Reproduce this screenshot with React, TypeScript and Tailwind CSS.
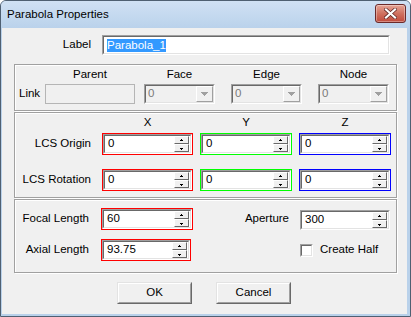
import React from "react";

const Sunken = ({ className = "", inner = "", children }: { className?: string; inner?: string; children?: React.ReactNode }) => (
  <div className={`border border-t-[#a0a0a0] border-l-[#a0a0a0] border-b-white border-r-white ${className}`}>
    <div className={`h-full w-full border border-t-[#696969] border-l-[#696969] border-b-[#e3e3e3] border-r-[#e3e3e3] ${inner}`}>{children}</div>
  </div>
);

const Up = () => (
  <svg width="5" height="3" viewBox="0 0 5 3" shapeRendering="crispEdges">
    <rect x="2" y="0" width="1" height="1" fill="#000" />
    <rect x="1" y="1" width="3" height="1" fill="#000" />
  </svg>
);
const Down = () => (
  <svg width="5" height="3" viewBox="0 0 5 3" shapeRendering="crispEdges">
    <rect x="1" y="1" width="3" height="1" fill="#000" />
    <rect x="2" y="2" width="1" height="1" fill="#000" />
  </svg>
);

const SpinBtn = ({ children }: { children: React.ReactNode }) => (
  <div className="flex-1 flex items-center justify-center bg-[#f0f0f0] border border-t-white border-l-white border-b-[#696969] border-r-[#696969]">
    {children}
  </div>
);

const Spin = ({ value, color, w, h = 22 }: { value: string; color?: string; w: number; h?: number }) => {
  const field = (
    <Sunken className="h-full w-full" inner="bg-white flex items-stretch">
      <div className="flex-1 flex items-center pl-[3px] text-black">{value}</div>
      <div className="flex flex-col w-[16px] pr-[1px] py-0">
        <SpinBtn><Up /></SpinBtn>
        <SpinBtn><Down /></SpinBtn>
      </div>
    </Sunken>
  );
  if (!color) return <div style={{ width: w, height: h }}>{field}</div>;
  return (
    <div className={`border ${color}`} style={{ width: w, height: h }}>
      {field}
    </div>
  );
};

const Combo = () => (
  <Sunken className="w-[71px] h-[20px]" inner="bg-[#f0f0f0] flex items-stretch">
    <div className="flex-1 flex items-center pl-[2px] text-[#7a7a7a]">0</div>
    <div className="w-[17px] flex items-center justify-center bg-[#f0f0f0] border border-t-white border-l-white border-b-[#a0a0a0] border-r-[#a0a0a0]">
      <svg width="7" height="4" viewBox="0 0 7 4" shapeRendering="crispEdges">
        <rect x="0" y="0" width="7" height="1" fill="#a0a0a0" />
        <rect x="1" y="1" width="5" height="1" fill="#a0a0a0" />
        <rect x="2" y="2" width="3" height="1" fill="#a0a0a0" />
        <rect x="3" y="3" width="1" height="1" fill="#a0a0a0" />
      </svg>
    </div>
  </Sunken>
);

const Btn = ({ label }: { label: string }) => (
  <div className="w-[75px] h-[22px] border border-t-[#e3e3e3] border-l-[#e3e3e3] border-b-[#696969] border-r-[#696969]">
    <div className="h-full w-full bg-[#f0f0f0] border border-t-white border-l-white border-b-[#a0a0a0] border-r-[#a0a0a0] flex items-center justify-center text-black">
      {label}
    </div>
  </div>
);

const group = "border border-[#a0a0a0] shadow-[1px_1px_0_#fff,inset_1px_1px_0_#fff] w-[383px] ml-[12px]";

export default function App() {
  return (
    <div className="w-[411px] h-[317px] bg-[#b9d1ea] border border-[#4f6072] rounded-t-[6px] flex flex-col font-['Liberation_Sans',Arial,sans-serif] text-[11.5px] text-black overflow-hidden">
      {/* Title bar */}
      <div className="h-[27px] flex items-start justify-between bg-gradient-to-b from-[#d0e1f4] to-[#bad2eb]">
        <div className="pl-[6px] pt-[5px] text-[11.5px] leading-[16px] text-black">Parabola Properties</div>
        <div className="mt-[3px] mr-[4px] w-[31px] h-[19px] rounded-[3px] border border-[#6b2a2a] bg-gradient-to-b from-[#e5a496] via-[#cf7160] to-[#c04a3c] flex items-center justify-center shadow-[inset_0_0_0_1px_rgba(255,255,255,0.35)]">
          <svg width="13" height="11" viewBox="0 0 13 11">
            <path d="M2 1.5 L11 9.5 M11 1.5 L2 9.5" stroke="#5a2424" strokeWidth="3.6" strokeLinecap="square" />
            <path d="M2 1.5 L11 9.5 M11 1.5 L2 9.5" stroke="#ffffff" strokeWidth="2.2" strokeLinecap="square" />
          </svg>
        </div>
      </div>

      {/* Client area */}
      <div className="flex-1 ml-[1px] mr-[3px] mb-[2px] bg-[#f0f0f0] flex flex-col">
        {/* Label row */}
        <div className="mt-[7px] flex items-center h-[20px]">
          <div className="w-[89px] text-right">Label</div>
          <Sunken className="ml-[11px] w-[288px] h-[20px]" inner="bg-white flex items-center pl-[3px]">
            <span className="bg-[#3399ff] text-white leading-[13px]">Parabola_1</span>
          </Sunken>
        </div>

        {/* Group 1 */}
        <div className={`${group} mt-[9px] h-[47px]`}>
          <div className="flex h-[19px] items-center">
            <div className="w-[30px]" />
            <div className="w-[90px] text-center">Parent</div>
            <div className="ml-[9px] w-[71px] text-center">Face</div>
            <div className="ml-[16px] w-[71px] text-center">Edge</div>
            <div className="ml-[16px] w-[71px] text-center">Node</div>
          </div>
          <div className="flex h-[20px] items-center">
            <div className="w-[30px] pl-[4px]">Link</div>
            <div className="w-[90px] h-[20px] border border-[#b5b5b5] bg-[#f0f0f0]" />
            <div className="ml-[9px]"><Combo /></div>
            <div className="ml-[16px]"><Combo /></div>
            <div className="ml-[16px]"><Combo /></div>
          </div>
        </div>

        {/* Group 2 */}
        <div className={`${group} mt-[1px] h-[86px]`}>
          <div className="flex h-[20px] items-center">
            <div className="w-[87px]" />
            <div className="w-[91px] text-center">X</div>
            <div className="ml-[7px] w-[92px] text-center">Y</div>
            <div className="ml-[7px] w-[92px] text-center">Z</div>
          </div>
          <div className="flex h-[22px] items-center">
            <div className="w-[76px] text-right">LCS Origin</div>
            <div className="ml-[11px]"><Spin value="0" color="border-[#ff0000]" w={91} /></div>
            <div className="ml-[7px]"><Spin value="0" color="border-[#00ff00]" w={92} /></div>
            <div className="ml-[7px]"><Spin value="0" color="border-[#0000ff]" w={92} /></div>
          </div>
          <div className="flex h-[22px] items-center mt-[14px]">
            <div className="w-[76px] text-right">LCS Rotation</div>
            <div className="ml-[11px]"><Spin value="0" color="border-[#ff0000]" w={91} /></div>
            <div className="ml-[7px]"><Spin value="0" color="border-[#00ff00]" w={92} /></div>
            <div className="ml-[7px]"><Spin value="0" color="border-[#0000ff]" w={92} /></div>
          </div>
        </div>

        {/* Group 3 */}
        <div className={`${group} mt-[1px] h-[74px]`}>
          <div className="mt-[8px] flex h-[22px] items-center">
            <div className="w-[74px] text-right">Focal Length</div>
            <div className="ml-[12px]"><Spin value="60" color="border-[#ff0000]" w={92} /></div>
            <div className="w-[96px] text-right">Aperture</div>
            <div className="ml-[11px] mt-[2px]"><Spin value="300" w={90} h={20} /></div>
          </div>
          <div className="mt-[9px] flex h-[22px] items-center">
            <div className="w-[74px] text-right">Axial Length</div>
            <div className="ml-[12px]"><Spin value="93.75" color="border-[#ff0000]" w={90} /></div>
            <div className="ml-[109px] flex items-center">
              <Sunken className="w-[13px] h-[13px]" inner="bg-white" />
              <span className="ml-[7px]">Create Half</span>
            </div>
          </div>
        </div>

        {/* Buttons */}
        <div className="mt-[9px] flex ml-[115px] gap-[24px]">
          <Btn label="OK" />
          <Btn label="Cancel" />
        </div>
      </div>
    </div>
  );
}
